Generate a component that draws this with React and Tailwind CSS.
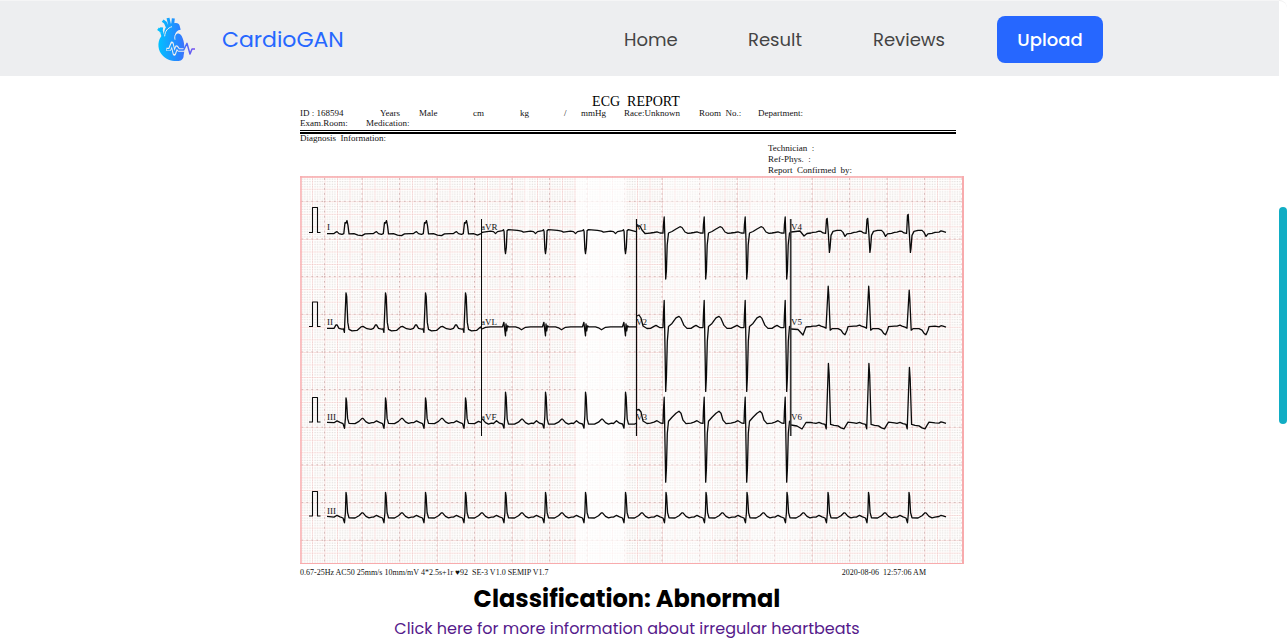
import React from "react";

const BEATS = [346, 385.5, 425.5, 465.5, 505.5, 545.5, 585.5, 625.5, 666, 706, 747, 787, 828, 868.5, 909];
const LAST_BEAT = BEATS[BEATS.length - 1];

// Each complex is a list of [dx, dy] offsets around the R peak, in pixels.
const COMPLEX = {
  I: [[-12, 0], [-10, -1.5], [-9, -2], [-7, 0], [-4, 0.7], [-2.2, 0], [-1, -11], [0, -10.5], [1, -13], [2, -8], [3, 0.3], [8, 0], [12, 1.5], [16, 2], [19, 0.3], [25, 0]],
  II: [[-12, 0], [-10, -3.5], [-9, -3.5], [-7, 0], [-4, 0.7], [-2.5, 0.5], [-1.6, 4], [0, -35.5], [0.7, -32], [1.8, -6], [3, 1], [6, 2.5], [11, 2], [15, -1.5], [17, -2], [21, 0.3], [25, 1]],
  III: [[-12, 0.3], [-9, -1.5], [-6, 0], [-3, 1.2], [-1.5, 6], [-0.6, -4], [0, -24.5], [0.6, -21], [1.6, -4], [3, 1], [9, 1.2], [13, -1], [16, -4], [17, -4], [20, -0.5], [23, 1], [26, 0.3]],
  aVR: [[-12, 0], [-10, 2], [-8, 0], [-3, -1], [-2, -2], [-1.4, 0], [-0.6, 18], [0, 22], [0.8, 16], [1.6, -1], [3, -2], [12, -1.2], [16, -0.5], [18, 0.5], [25, -0.5]],
  aVL: [[-10, 0], [-3, 0], [-1.6, -4.5], [-1, 1], [0, 9], [0.5, -3], [1.2, 4], [2, -1], [3, 0], [10, 0], [13, 1], [16, 3], [20, 0.5], [25, 0]],
  aVF: [[-12, 0.3], [-9, -2.5], [-6, 0], [-3, 0.8], [-1.5, 5], [-0.6, -8], [0, -31], [0.7, -26], [1.7, -4], [3, 1], [9, 1], [13, -1], [16, -4], [17, -4], [20, -0.5], [23, 1], [26, 0]],
  V1: [[-12, -0.5], [-9, -1.2], [-6, 0], [-3, 0.2], [-2.6, -8], [-1.8, -16], [-1, 8], [-0.3, 46], [0.4, 38], [1.2, 12], [2.5, 0], [6, -1.5], [10, -4], [14, -6.3], [16, -5.5], [19, -1], [22, 0.3], [25, 0]],
  V2: [[-12, -1], [-10, -2], [-6, 0.3], [-3, 0.2], [-2.6, -12], [-1.8, -27], [-1, 20], [-0.3, 64], [0.4, 50], [1.3, 14], [2.5, -1], [6, -4], [10, -9.5], [13, -11], [15, -9], [18, -2], [21, 1], [25, 1]],
  V3: [[-12, -1], [-9, -2.5], [-5, 0], [-3, 0.2], [-2.6, -12], [-1.8, -26], [-1, 20], [-0.3, 59], [0.4, 46], [1.3, 10], [2.5, -2], [6, -6], [10, -10], [13, -12], [15, -10], [17, -3], [20, 0.5], [25, 0]],
  V4: [[-12, -0.3], [-9, -1.2], [-7, -1], [-5, 0.5], [-2.4, 1], [-1.5, -13], [-0.8, -14], [0.4, 2], [1.4, 20], [2, 16], [3, 3], [5, -1], [9, -2], [13, -2], [15, 0], [17, 4], [19, 1.5], [23, 1], [26, 0]],
  V5: [[-12, -1], [-9, -2], [-7, -1], [-4, 0], [-2, 1], [0.2, -41], [0.8, -32], [2.2, 3], [4, 1.5], [10, 1.5], [13, 3], [15, 6], [17, 7.5], [19, 3], [20, -0.5], [26, -1]],
  V6: [[-12, 0], [-9, -1], [-6, 0.3], [-3, 1], [-1.8, 5.5], [0.4, -60], [1.2, -48], [2.6, 1], [6, 2], [10, 2.5], [13, 4.5], [16, 5.5], [18, 2], [20, -1.2], [26, -0.5]],
};

function trace(lead, base, from, to, start, lastPeakShift = 0) {
  const pts = [...start];
  for (const beat of BEATS) {
    for (const [dx, dy] of COMPLEX[lead]) {
      const x = beat + dx;
      const shift = beat === LAST_BEAT && dy < -10 ? lastPeakShift : 0;
      if (x >= from && x <= to && x > pts[pts.length - 1][0]) pts.push([x, base + dy + shift]);
    }
  }
  if (to === 946) pts.push([939, base - 0.3], [941, base - 1.5], [943, base - 1]);
  pts.push([to, base]);
  return pts.map(([x, y]) => `${x.toFixed(1)},${y.toFixed(1)}`).join(" ");
}

const TRACES = [
  trace("I", 233.6, 327, 481, [[327, 233.6]]),
  trace("aVR", 231.6, 482, 636, [[482, 232.5]]),
  trace("V1", 233, 637, 790, [[637, 226], [640, 226], [642, 230], [645, 233.5]]),
  trace("V4", 232.4, 791, 946, [[791, 232], [800, 231], [804, 236], [807, 233.5], [811, 233]], -4),
  trace("II", 328.4, 327, 481, [[327, 328.4]]),
  trace("aVL", 326.8, 482, 636, [[482, 329]]),
  trace("V2", 327.4, 637, 790, [[637, 316], [639, 315], [641, 318], [643, 326], [647, 328.5]]),
  trace("V5", 327.2, 791, 946, [[791, 329], [798, 329.5], [803, 335], [806, 327], [811, 326.5]], 4),
  trace("III", 422.4, 327, 481, [[327, 422.4]]),
  trace("aVF", 423.2, 482, 636, [[482, 419]]),
  trace("V3", 423.2, 637, 790, [[637, 410], [639, 409.5], [641, 412], [643, 421], [647, 423.5]]),
  trace("V6", 423.4, 791, 946, [[791, 425], [797, 426], [802, 429], [806, 422.5], [811, 422.5]], 4),
  trace("III", 516.8, 327, 946, [[327, 516.4]]),
];

const LABELS = [
  ["I", 327, 230], ["aVR", 481, 230], ["V1", 636, 230], ["V4", 791, 230],
  ["II", 327, 325], ["aVL", 481, 325], ["V2", 636, 325], ["V5", 791, 325],
  ["III", 327, 420], ["aVF", 481, 420], ["V3", 636, 420], ["V6", 791, 420],
  ["III", 327, 514],
];

const PULSES = [[232.5, 207.5], [326.5, 302], [422, 397.5], [516, 491.5]];
const MINOR = [2.5, 5, 7.5, 10];

// Vertical strips of the scan: [x, width, opacity of the fading].
const FADED = [[525, 4, 0.5], [576, 50, 0.7], [664, 50, 0.35], [750, 50, 0.35]];

function EcgChart() {
  return (
    <svg viewBox="300 176 664 388" className="block w-full" role="img" aria-label="12-lead ECG">
      <defs>
        <pattern id="minor" x="299.5" y="176.2" width="12.5" height="12.55" patternUnits="userSpaceOnUse">
          {MINOR.map((y) => MINOR.map((x) => (
            <rect key={`${x}-${y}`} x={x} y={y} width="1" height="1" fill="#d4cecc" />
          )))}
        </pattern>
        <pattern id="medium" x="299.5" y="176.2" width="12.5" height="12.55" patternUnits="userSpaceOnUse">
          <path d="M0 .5H12.5M.5 0V12.55" stroke="#fdeceb" strokeWidth="1" />
          <path d="M0 .5H12.5M.5 0V12.55" stroke="#ecc9c7" strokeWidth="1" strokeDasharray="1 1.5" />
        </pattern>
        <pattern id="major" x="324" y="200.8" width="37.5" height="37.65" patternUnits="userSpaceOnUse">
          <path d="M0 .5H37.5M.5 0V37.65" stroke="#cdb0ae" strokeWidth="1" strokeDasharray="1.5 3.5" />
        </pattern>
      </defs>
      <rect x="300" y="176" width="664" height="388" fill="#fffefd" />
      <rect x="300" y="176" width="664" height="388" fill="url(#minor)" />
      <rect x="300" y="176" width="664" height="388" fill="url(#medium)" />
      <rect x="300" y="176" width="664" height="388" fill="url(#major)" />
      {FADED.map(([x, width, opacity]) => (
        <rect key={x} x={x} y="178" width={width} height="385" fill="#fff" opacity={opacity} />
      ))}
      <path d="M300 177H964M301 176V564" stroke="#f8abad" strokeWidth="1.4" />
      <path d="M300 563.5H964" stroke="#f8abad" strokeWidth="1" />
      <path d="M963 176V564" stroke="#f8abad" strokeWidth="2" />
      <g fill="none" stroke="#0a0a0a" strokeWidth="1.3" strokeLinejoin="round">
        {TRACES.map((points, i) => <polyline key={i} points={points} />)}
        {PULSES.map(([low, high]) => (
          <path key={low} d={`M309 ${low}H312.5V${high}H317.5V${low}H320.5`} strokeWidth="1.1" />
        ))}
        <path d="M481.5 219V436" strokeWidth="1" />
        <path d="M636.5 219V436" strokeWidth="1.2" />
        <path d="M790.7 219V436" stroke="#333" strokeWidth="1.7" />
      </g>
      <g fill="#111" fontFamily="'Liberation Serif', serif" fontSize="9">
        {LABELS.map(([text, x, y]) => <text key={`${x}-${y}`} x={x} y={y}>{text}</text>)}
      </g>
    </svg>
  );
}

function HeartLogo() {
  return (
    <svg viewBox="50 50 117 138" className="h-[46px] w-[39px]" aria-hidden="true">
      <defs>
        <linearGradient id="heart" x1="52" y1="0" x2="164" y2="0" gradientUnits="userSpaceOnUse">
          <stop offset="0" stopColor="#00c3ff" />
          <stop offset=".6" stopColor="#2b80ff" />
          <stop offset="1" stopColor="#7a4dee" />
        </linearGradient>
      </defs>
      <path fill="url(#heart)" d="M66 104C52 118 50 143 63 161C76 178 96 184 115 182C124 181 130 176 130 165C134 148 133 124 124 107C119 98 111 97 105 105L98 112L76 104Z" />
      <path fill="url(#heart)" d="M71 106C70 86 80 70 100 69C110 66 116 69 118 76L121 88C111 89 104 95 103 112L84 122Z" />
      <path fill="none" stroke="url(#heart)" strokeWidth="9" strokeLinejoin="round" d="M67 61L75 67L81 80M83 53L88 74M99 54L97 72" />
      <path fill="none" stroke="url(#heart)" strokeWidth="9" d="M53 85L63 92L68 108M64 81L62 96" />
      <path fill="none" stroke="#edeef0" strokeWidth="3" d="M73 108C74 92 82 83 95 79M104 118C101 105 107 96 121 92" />
      <path fill="none" stroke="#edeef0" strokeWidth="10" strokeLinejoin="round" d="M78 147H88L95 129L102 161L109 140L115 149H133" />
      <path fill="none" stroke="url(#heart)" strokeWidth="4.5" strokeLinejoin="round" d="M80 148H88L95 131L102 159L109 141L115 149H130L140 129L149 161L155 146H164" />
    </svg>
  );
}

const PATIENT = ["ID : 168594", "Years", "Male", "cm", "kg", "/", "mmHg", "Race:Unknown", "Room  No.:", "Department:"];

function Report() {
  return (
    <figure className="w-[664px] max-w-full font-['Liberation_Serif',serif] text-[9px] leading-[10px] text-[#111]">
      <div className="whitespace-pre">
        <h2 className="pl-2 text-center text-sm leading-3 text-black">ECG  REPORT</h2>
        <div className="grid grid-cols-[80px_39px_54px_47px_44px_17px_43px_75px_59px_auto]">
          {PATIENT.map((item) => <span key={item}>{item}</span>)}
        </div>
        <div className="grid grid-cols-[66px_auto] pb-0.5">
          <span>Exam.Room:</span>
          <span>Medication:</span>
        </div>
        <div className="mr-2 h-1 border-t border-b-2 border-black" />
        <p className="leading-[9px]">Diagnosis  Information:</p>
        <div className="flex flex-col pl-[468px] leading-[11px]">
          <span>Technician  :</span>
          <span>Ref-Phys.  :</span>
          <span>Report  Confirmed  by:</span>
        </div>
      </div>
      <EcgChart />
      <figcaption className="flex justify-between whitespace-pre pt-1 pr-[38px] text-[8px]">
        <span>0.67-25Hz AC50 25mm/s 10mm/mV 4*2.5s+1r ♥92  SE-3 V1.0 SEMIP V1.7</span>
        <span>2020-08-06  12:57:06 AM</span>
      </figcaption>
    </figure>
  );
}

export default function App() {
  return (
    <div className="flex min-h-screen bg-white font-['Poppins','Inter',sans-serif]">
      <div className="min-w-0 flex-1">
        <header className="flex h-[76px] items-center justify-between border-t border-[#f5f5f6] bg-[#edeef0] pt-0.5 pr-44 pl-[157px]">
          <a href="#home" className="flex items-center gap-[26px] text-[22px] text-[#2667ff]">
            <HeartLogo />
            CardioGAN
          </a>
          <nav className="grid grid-cols-[124px_125px_124px_106px] items-center text-lg text-[#444]">
            <a href="#home">Home</a>
            <a href="#result">Result</a>
            <a href="#reviews">Reviews</a>
            <button type="button" className="h-[47px] rounded-lg bg-[#2667ff] font-medium text-white">Upload</button>
          </nav>
        </header>
        <main className="flex flex-col items-center pt-5 pr-[25px]">
          <div className="pb-px pl-[10px]">
            <Report />
          </div>
          <h1 className="pt-1 text-2xl leading-8 font-bold text-black">Classification: Abnormal</h1>
          <a href="#irregular-heartbeats" className="text-base leading-7 text-[#551a8b]">
            Click here for more information about irregular heartbeats
          </a>
        </main>
      </div>
      <div className="w-2 shrink-0 rounded-tr-lg border-t border-[#f0f0f0] pt-[206px]">
        <div className="h-[217px] rounded-full bg-[#11adc4]" />
      </div>
    </div>
  );
}
